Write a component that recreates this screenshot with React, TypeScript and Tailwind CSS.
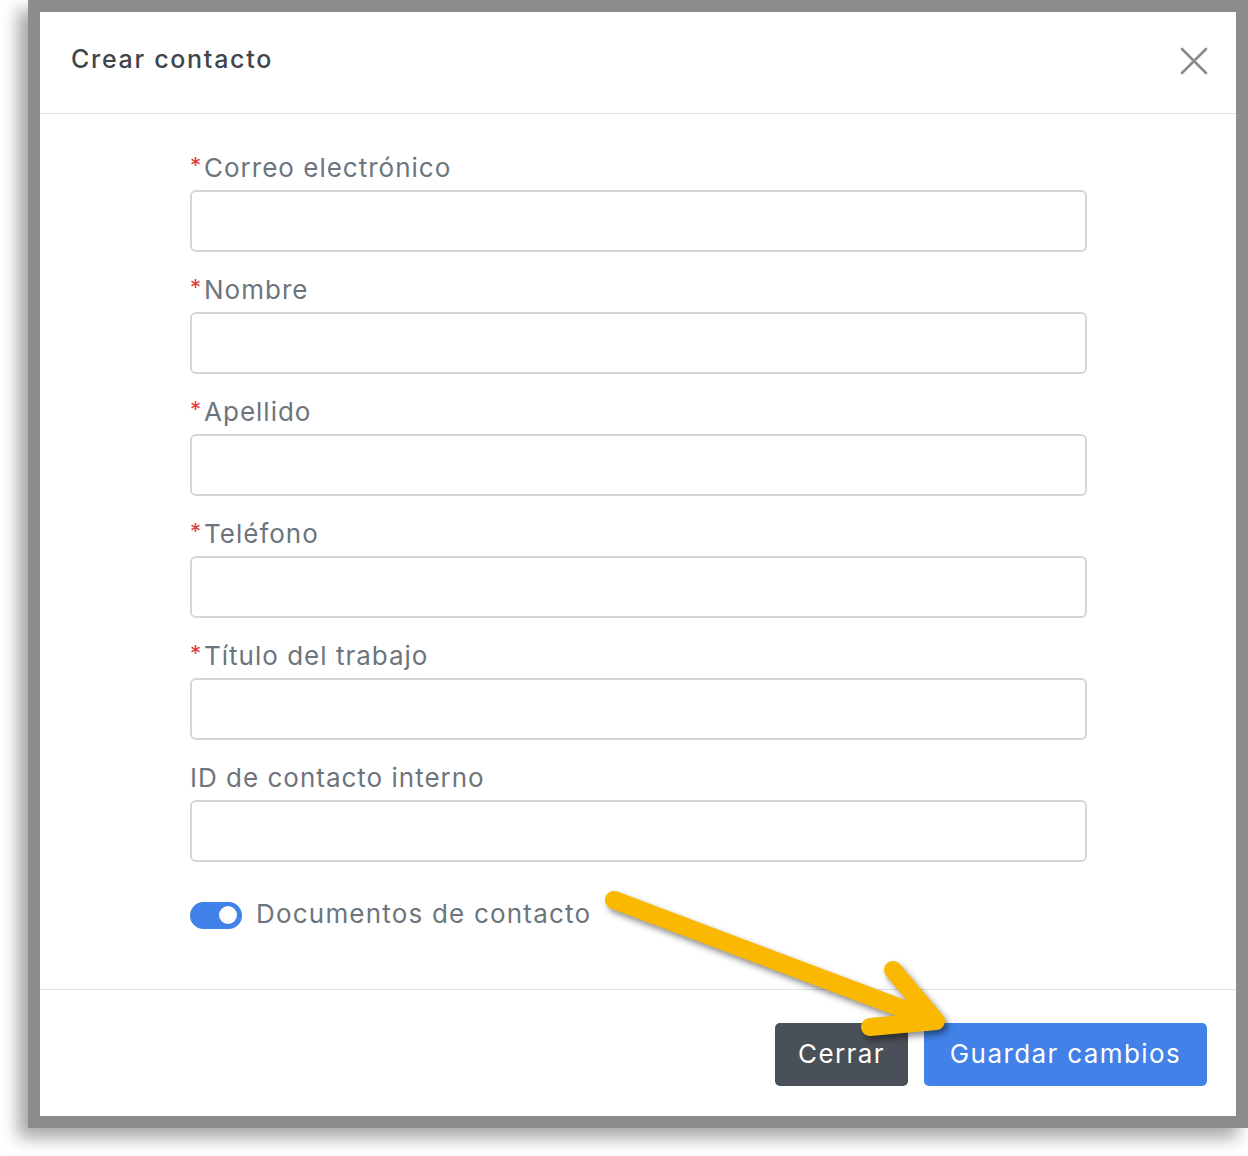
import React from "react";

const fields = [
  { label: "Correo electrónico", req: true },
  { label: "Nombre", req: true },
  { label: "Apellido", req: true },
  { label: "Teléfono", req: true },
  { label: "Título del trabajo", req: true },
  { label: "ID de contacto interno", req: false },
];

export default function App() {
  return (
    <div
      className="relative w-[1248px] h-[1156px] bg-white overflow-hidden"
      style={{ fontFamily: "Inter, 'Noto Sans', sans-serif" }}
    >
      <div className="ml-[28px] w-[1220px] h-[1128px] bg-[#8c8c8c] p-[12px] shadow-[-10px_10px_16px_rgba(0,0,0,0.35)]">
        <div className="w-full h-full bg-white flex flex-col">
          <div className="h-[102px] border-b border-[#dee2e6] flex items-center justify-between pl-[31px] pr-[28px] shrink-0">
            <div className="text-[25px] font-medium text-[#3f454c] tracking-[1.7px] -mt-[6px]">Crear contacto</div>
            <svg width="28" height="28" viewBox="0 0 28 28" className="-mt-[4px]">
              <path d="M2 2 L26 26 M26 2 L2 26" stroke="#8a8a8a" strokeWidth="2.6" strokeLinecap="round" />
            </svg>
          </div>
          <div className="flex-1 pt-[36px] pl-[150px] pr-[149px] flex flex-col">
            {fields.map((f) => (
              <div key={f.label} className="mb-[20px]">
                <div className="h-[36px] leading-[36px] mb-[4px] text-[26px] tracking-[1px] text-[#6c757d] flex items-center">
                  {f.req && <span className="text-[#e03c3c] text-[22px] mr-[3px] -mt-[6px] tracking-normal">*</span>}
                  <span>{f.label}</span>
                </div>
                <div className="h-[62px] border-[2px] border-[#d3d7dc] rounded-[6px]" />
              </div>
            ))}
            <div className="mt-[17px] flex items-center h-[32px]">
              <div className="w-[52px] h-[27px] rounded-full bg-[#4181e8] flex items-center justify-end pr-[5px]">
                <div className="w-[18px] h-[18px] rounded-full bg-white" />
              </div>
              <span className="ml-[14px] text-[26px] tracking-[1.2px] text-[#6c757d] -mt-[3px]">Documentos de contacto</span>
            </div>
          </div>
          <div className="h-[127px] border-t border-[#dee2e6] flex justify-end items-start pt-[33px] pr-[29px] gap-[16px] shrink-0">
            <button className="h-[63px] w-[133px] rounded-[5px] bg-[#4a5057] text-white text-[26px] tracking-[1.4px] pb-[3px]">Cerrar</button>
            <button className="h-[63px] w-[283px] rounded-[5px] bg-[#4181e8] text-white text-[26px] tracking-[1.4px] pb-[3px]">Guardar cambios</button>
          </div>
        </div>
      </div>
      <svg
        className="absolute left-0 top-0 pointer-events-none"
        width="1248"
        height="1156"
        style={{ filter: "drop-shadow(3px 4px 3px rgba(0,0,0,0.45))" }}
      >
        <g stroke="#fbb800" strokeWidth="18" strokeLinecap="round" strokeLinejoin="round" fill="none">
          <line x1="614" y1="900" x2="930" y2="1019" />
          <polyline points="893,970 936,1021 870,1027" />
        </g>
      </svg>
    </div>
  );
}
